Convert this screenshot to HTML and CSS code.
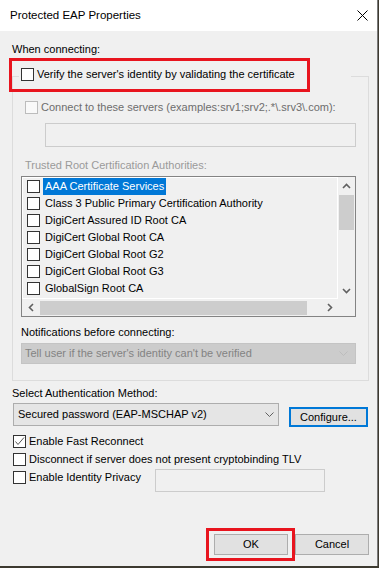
FILE: index.html
```html
<!DOCTYPE html>
<html lang="en">
<head>
  <meta charset="UTF-8" />
  <meta name="viewport" content="width=device-width, initial-scale=1.0" />
  <title>Protected EAP Properties</title>
  <link rel="stylesheet" href="styles.css">
</head>
<body>
  <div class="dialog">
    <div class="titlebar">
      <span class="title">Protected EAP Properties</span>
      <svg class="close" width="11" height="11" viewBox="0 0 11 11">
        <path d="M0.5 0.5 L10.5 10.5 M10.5 0.5 L0.5 10.5" stroke="#000" stroke-width="1" fill="none" />
      </svg>
    </div>

    <div class="content">
      <div class="top-label">When connecting:</div>

      <div class="group">
        <div class="group-head">
          <span class="cb"></span>
          <span class="cb-text">Verify the server's identity by validating the certificate</span>
          <span class="mark mark-verify"></span>
        </div>

        <div class="row connect-row disabled">
          <span class="cb cb-off"></span>
          <span class="cb-text">Connect to these servers (examples:srv1;srv2;.*\.srv3\.com):</span>
        </div>
        <div class="textbox servers"></div>

        <div class="trusted faint">Trusted Root Certification Authorities:</div>

        <div class="list">
          <div class="list-items">
            <div class="item"><span class="cb"></span><span class="item-text selected">AAA Certificate Services</span></div>
            <div class="item"><span class="cb"></span><span class="item-text">Class 3 Public Primary Certification Authority</span></div>
            <div class="item"><span class="cb"></span><span class="item-text">DigiCert Assured ID Root CA</span></div>
            <div class="item"><span class="cb"></span><span class="item-text">DigiCert Global Root CA</span></div>
            <div class="item"><span class="cb"></span><span class="item-text">DigiCert Global Root G2</span></div>
            <div class="item"><span class="cb"></span><span class="item-text">DigiCert Global Root G3</span></div>
            <div class="item"><span class="cb"></span><span class="item-text">GlobalSign Root CA</span></div>
          </div>
          <div class="vscroll">
            <span class="arrow">
              <svg width="9" height="6" viewBox="0 0 9 6"><polyline points="1,5 4.5,1.5 8,5" fill="none" stroke="#606060" stroke-width="1.6" /></svg>
            </span>
            <span class="vthumb"></span>
            <span class="arrow arrow-end">
              <svg width="9" height="6" viewBox="0 0 9 6"><polyline points="1,1 4.5,4.5 8,1" fill="none" stroke="#606060" stroke-width="1.6" /></svg>
            </span>
          </div>
          <div class="hscroll">
            <span class="arrow">
              <svg width="6" height="9" viewBox="0 0 6 9"><polyline points="5,1 1.5,4.5 5,8" fill="none" stroke="#606060" stroke-width="1.6" /></svg>
            </span>
            <span class="hthumb"></span>
            <span class="arrow arrow-end">
              <svg width="6" height="9" viewBox="0 0 6 9"><polyline points="1,1 4.5,4.5 1,8" fill="none" stroke="#606060" stroke-width="1.6" /></svg>
            </span>
          </div>
          <div class="corner"></div>
        </div>

        <div class="notify">Notifications before connecting:</div>
        <div class="select select-off">
          <span>Tell user if the server's identity can't be verified</span>
          <svg width="9" height="5" viewBox="0 0 9 5"><polyline points="0.5,0.5 4.5,4.5 8.5,0.5" fill="none" stroke="#bdbdbd" stroke-width="1" /></svg>
        </div>
      </div>

      <div class="method-label">Select Authentication Method:</div>
      <div class="method-row">
        <div class="select method">
          <span>Secured password (EAP-MSCHAP v2)</span>
          <svg width="9" height="5" viewBox="0 0 9 5"><polyline points="0.5,0.5 4.5,4.5 8.5,0.5" fill="none" stroke="#606060" stroke-width="1" /></svg>
        </div>
        <button class="btn btn-focus configure">Configure...</button>
      </div>

      <div class="row option">
        <span class="cb">
          <svg width="11" height="11" viewBox="0 0 11 11"><polyline points="1.5,5.5 4,8.5 10,1.5" fill="none" stroke="#555" stroke-width="1" /></svg>
        </span>
        <span class="cb-text">Enable Fast Reconnect</span>
      </div>
      <div class="row option">
        <span class="cb"></span>
        <span class="cb-text">Disconnect if server does not present cryptobinding TLV</span>
      </div>
      <div class="privacy-row">
        <div class="row privacy">
          <span class="cb"></span>
          <span class="cb-text">Enable Identity Privacy</span>
        </div>
        <div class="textbox identity"></div>
      </div>

      <div class="footer">
        <span class="ok-wrap">
          <button class="btn">OK</button>
          <span class="mark mark-ok"></span>
        </span>
        <button class="btn">Cancel</button>
      </div>
    </div>
  </div>
</body>
</html>
```

FILE: styles.css
```css
body {
  margin: 0;
  background: #3d3a30;
  font-family: "Liberation Sans", Arial, sans-serif;
  font-size: 11px;
  line-height: 15px;
  color: #000;
}
.dialog {
  width: 378px;
  height: 566px;
  box-sizing: border-box;
  border-right: 1px solid #7a7a7a;
  background: #f0f0f0;
}
.titlebar {
  height: 31px;
  background: #fff;
  display: flex;
  align-items: center;
  justify-content: space-between;
  padding: 0 9px 0 10px;
}
.title {
  font-size: 11.5px;
}
.close {
  display: block;
  margin-top: -1px;
}
.content {
  padding-left: 12px;
}
.top-label {
  margin-top: 11px;
}

/* group box */
.group {
  margin-top: 19px;
  width: 357px;
  height: 305px;
  box-sizing: border-box;
  border: 1px solid #dcdcdc;
}
.group-head {
  position: relative;
  margin: -9px 0 0 6px;
  width: 332px;
  height: 13px;
  line-height: 13px;
  background: #f0f0f0;
  display: flex;
  align-items: center;
}
.group-head .cb {
  margin-left: 2px;
}
.mark {
  position: absolute;
  border: 3px solid #e8141e;
  box-sizing: border-box;
}
.mark-verify {
  left: -10px;
  top: -10px;
  width: 301px;
  height: 34px;
}

.row {
  display: flex;
  align-items: center;
  height: 15px;
}
.cb {
  width: 13px;
  height: 13px;
  box-sizing: border-box;
  border: 1px solid #333;
  background: #fff;
  flex-shrink: 0;
  display: flex;
  align-items: center;
  justify-content: center;
}
.cb svg {
  display: block;
}
.cb-text {
  margin-left: 3px;
  white-space: nowrap;
}
.cb-off {
  border-color: #bcbcbc;
  background: #f9f9f9;
}
.disabled {
  color: #6d6d6d;
}
.faint {
  color: #9a9a9a;
}
.connect-row {
  margin: 19px 0 0 12px;
}
.textbox {
  box-sizing: border-box;
  border: 1px solid #cccccc;
  background: #f0f0f0;
}
.servers {
  margin: 8px 0 0 32px;
  width: 311px;
  height: 24px;
}
.trusted {
  margin: 11px 0 0 12px;
}

/* certificate list */
.list {
  margin: 3px 0 0 8px;
  width: 335px;
  height: 141px;
  box-sizing: border-box;
  border: 1px solid #838383;
  display: grid;
  grid-template-columns: 1fr 17px;
  grid-template-rows: 1fr 17px;
}
.list-items {
  border: 1px solid #fff;
  overflow: hidden;
  padding-left: 4px;
}
.item {
  height: 17px;
  display: flex;
  align-items: center;
  white-space: nowrap;
}
.item-text {
  margin-left: 3px;
  padding: 0 2px;
  height: 17px;
  line-height: 17px;
}
.selected {
  background: #0078d7;
  color: #fff;
}
.vscroll {
  display: flex;
  flex-direction: column;
  align-items: center;
}
.hscroll {
  display: flex;
  align-items: center;
}
.arrow {
  width: 17px;
  height: 17px;
  display: flex;
  align-items: center;
  justify-content: center;
  flex-shrink: 0;
}
.arrow svg {
  display: block;
}
.vscroll .arrow-end {
  margin-top: auto;
}
.hscroll .arrow-end {
  margin-left: auto;
}
.vthumb {
  margin-top: 1px;
  width: 15px;
  height: 35px;
  background: #cdcdcd;
}
.hthumb {
  margin-left: 1px;
  width: 267px;
  height: 14px;
  background: #cdcdcd;
}

.notify {
  margin: 8px 0 0 8px;
}
.select {
  box-sizing: border-box;
  display: flex;
  align-items: center;
  justify-content: space-between;
  white-space: nowrap;
}
.select svg {
  display: block;
}
.select-off {
  margin: 3px 0 0 8px;
  width: 335px;
  height: 21px;
  padding: 0 7px 0 3px;
  background: #cccccc;
  border: 1px solid #c4c4c4;
  color: #838383;
}

/* authentication method */
.method-label {
  margin-top: 5px;
}
.method-row {
  margin-top: 2px;
  display: flex;
  align-items: flex-start;
}
.method {
  margin-left: 1px;
  width: 266px;
  height: 23px;
  padding: 0 4px 0 4px;
  background: #e5e5e5;
  border: 1px solid #adadad;
}
.btn {
  font: inherit;
  color: #000;
  padding: 0;
  width: 74px;
  height: 21px;
  box-sizing: border-box;
  background: #e1e1e1;
  border: 1px solid #adadad;
}
.btn-focus {
  border: 2px solid #0078d7;
}
.configure {
  margin: 4px 0 0 10px;
  width: 79px;
  height: 20px;
}
.option {
  margin-left: 1px;
  margin-top: 7px;
}
.option + .option {
  margin-top: 3px;
}
.privacy-row {
  margin-top: 3px;
  display: flex;
  align-items: flex-start;
}
.privacy {
  margin-left: 1px;
  width: 142px;
}
.identity {
  margin-top: -1px;
  width: 170px;
  height: 23px;
}

.footer {
  margin-top: 42px;
  width: 357px;
  display: flex;
  justify-content: flex-end;
  gap: 7px;
}
.ok-wrap {
  position: relative;
  display: block;
}
.ok-wrap .btn {
  display: block;
}
.mark-ok {
  left: -8px;
  top: -6px;
  width: 89px;
  height: 33px;
}
```
